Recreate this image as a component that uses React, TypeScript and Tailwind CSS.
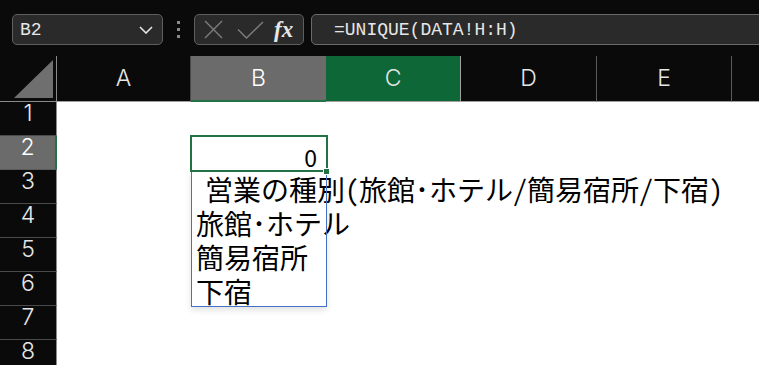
// sheet view: formula bar, headers, spill of UNIQUE()
const rows = [1, 2, 3, 4, 5, 6, 7, 8]

const cellText: Record<number, string> = {
    3: " 営業の種別(旅館･ホテル/簡易宿所/下宿)",
    4: "旅館･ホテル",
    5: "簡易宿所",
    6: "下宿",
}

const jp = "font-['Noto_Sans_Mono_CJK_JP','Noto_Sans_CJK_JP',sans-serif]"

export default function App() {
    return (
        <div className="w-[759px] h-[365px] overflow-hidden bg-white">
            {/* FORMULA BAR */}
            <div className="flex h-[56px] items-start bg-[#0a0a0a] pl-[12px] pt-[14px] font-['Liberation_Mono',monospace] text-[18px] text-[#e6e6e6]">
                <div className="flex h-[31px] w-[151px] shrink-0 items-center justify-between rounded-[5px] border border-[#5e5e5e] bg-[#2a2a2a] pl-[7px] pr-[9px]">
                    <span className="leading-none">B2</span>
                    <svg width="14" height="8" viewBox="0 0 14 8" fill="none">
                        <path d="M1 1 L7 7 L13 1" stroke="#e6e6e6" strokeWidth="1.6" />
                    </svg>
                </div>
                <div className="flex h-[31px] w-[31px] shrink-0 flex-col items-center justify-center gap-[4px]">
                    <span className="h-[3px] w-[3px] bg-[#8a8a8a]" />
                    <span className="h-[3px] w-[3px] bg-[#8a8a8a]" />
                    <span className="h-[3px] w-[3px] bg-[#8a8a8a]" />
                </div>
                <div className="flex h-[31px] w-[110px] shrink-0 items-center rounded-[5px] border border-[#5e5e5e] bg-[#2a2a2a] pl-[9px]">
                    <svg width="19" height="19" viewBox="0 0 19 19" fill="none">
                        <path d="M1 1 L18 18 M18 1 L1 18" stroke="#7e7e7e" strokeWidth="1.4" />
                    </svg>
                    <svg className="ml-[14px]" width="27" height="18" viewBox="0 0 27 18" fill="none">
                        <path d="M1 8.5 L9.5 17 L26 1" stroke="#7e7e7e" strokeWidth="1.4" />
                    </svg>
                    <span className="ml-[10px] font-['Liberation_Serif',serif] text-[23px] font-bold italic leading-none text-[#e6e6e6]">fx</span>
                </div>
                <div className="ml-[7px] flex h-[31px] w-[470px] shrink-0 items-center rounded-l-[5px] border border-[#6a6a6a] bg-[#2a2a2a] pl-[22px]">
                    <span className="leading-none">=UNIQUE(DATA!H:H)</span>
                </div>
            </div>

            {/* COLUMN HEADERS */}
            <div className="flex h-[46px] bg-[#0a0a0a] font-['Inter',sans-serif] text-[23px] font-light text-[#e6e6e6]">
                <div className="relative w-[57px] shrink-0 border-r border-b border-[#8a8a8a]">
                    <svg className="absolute left-[14px] top-[4px]" width="39" height="38" viewBox="0 0 39 38">
                        <path d="M0 38 L39 0 L39 38 Z" fill="#6f6f6f" />
                    </svg>
                </div>
                <div className="flex w-[134px] shrink-0 items-center justify-center border-r border-b border-r-[#4a4a4a] border-b-[#a0a0a0]">A</div>
                <div className="flex w-[135px] shrink-0 items-center justify-center border-b-2 border-[#217346] bg-[#6b6b6b] text-white">B</div>
                <div className="flex w-[135px] shrink-0 items-center justify-center border-r border-b border-r-[#a0a0a0] border-b-[#a0a0a0] bg-[#0e6737]">C</div>
                <div className="flex w-[136px] shrink-0 items-center justify-center border-r border-b border-r-[#5a5a5a] border-b-[#a0a0a0]">D</div>
                <div className="flex w-[135px] shrink-0 items-center justify-center border-r border-b border-r-[#5a5a5a] border-b-[#a0a0a0]">E</div>
                <div className="flex-1 border-b border-[#a0a0a0]" />
            </div>

            {/* GRID */}
            <div className="relative">
                {rows.map((r) => (
                    <div key={r} className="flex h-[34px]">
                        <div
                            className={
                                r === 2
                                    ? "flex w-[57px] shrink-0 justify-center border-r-2 border-b border-r-[#217346] border-b-[#5a5a5a] bg-[#6b6b6b] font-['Inter',sans-serif] text-[23px] font-light leading-none text-white"
                                    : "flex w-[57px] shrink-0 justify-center border-r border-b border-r-[#8a8a8a] border-b-[#4a4a4a] bg-[#0a0a0a] font-['Inter',sans-serif] text-[23px] font-light leading-none text-[#e6e6e6]"
                            }
                        >
                            {r}
                        </div>
                        <div className="w-[134px] shrink-0" />
                        <div className="flex w-[135px] shrink-0 items-end">
                            {r === 2 && (
                                <span className="w-full pb-[1px] pr-[9px] text-right font-['Noto_Sans_CJK_JP',sans-serif] text-[23px] leading-none text-black">0</span>
                            )}
                            {cellText[r] && (
                                <span className={`whitespace-pre pb-[1px] text-[28px] leading-none text-black ${jp} ${r === 3 ? "pl-0" : "pl-[5px]"}`}>{cellText[r]}</span>
                            )}
                        </div>
                    </div>
                ))}

                {/* spill range */}
                <div className="absolute left-[191px] top-[68px] h-[137px] w-[136px] border border-[#4472c4] shadow-[0_3px_6px_rgba(0,0,0,0.12)]" />
                {/* active cell */}
                <div className="absolute left-[190px] top-[33px] h-[37px] w-[138px] border-2 border-[#217346]" />
                <div className="absolute left-[323px] top-[66px] h-[7px] w-[7px] border border-white bg-[#217346]" />
            </div>
        </div>
    )
}
